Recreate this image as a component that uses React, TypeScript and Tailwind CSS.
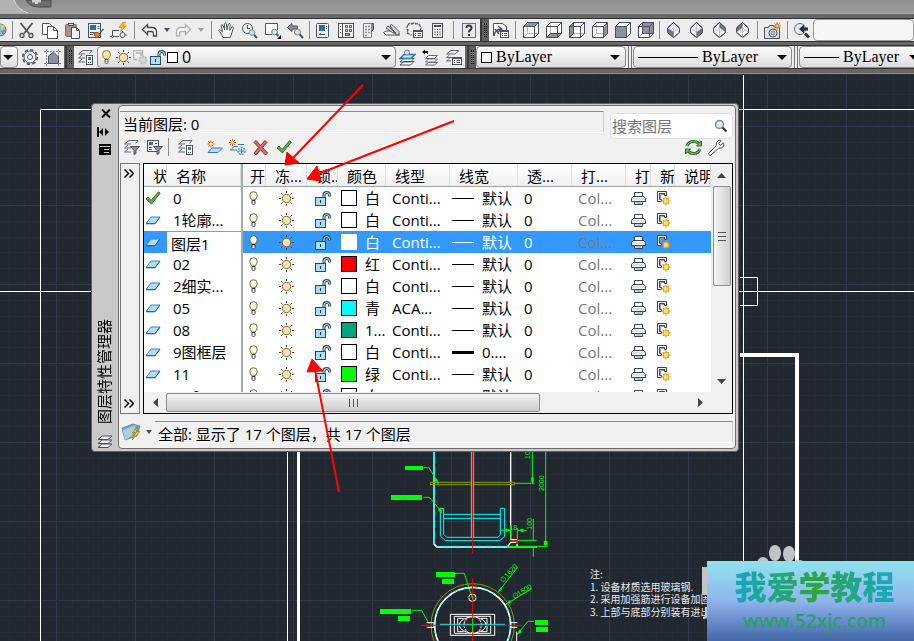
import type { ReactNode } from "react";

const INK = "#4b515d";
const SHADE = "#8b929e";

type SvgProps = { w?: number; h?: number; className?: string; children: ReactNode };

function Svg({ w = 17, h = 17, className = "", children }: SvgProps) {
  return (
    <svg
      width={w}
      height={h}
      viewBox={`0 0 ${w} ${h}`}
      fill="none"
      stroke={INK}
      className={`shrink-0 ${className}`}
      aria-hidden="true"
    >
      {children}
    </svg>
  );
}

/* ---------- toolbar icons ---------- */

const Globe = () => (
  <Svg w={9}>
    <circle cx="0" cy="8" r="6" fill="#7fc4ea" stroke="#3a6ea5" />
    <path d="M0 2 5 4 2 8z" fill="#f5d042" stroke="none" />
    <path d="M1 9 5 8 3 13z" fill="#e0662c" stroke="none" />
  </Svg>
);
const Scissors = () => (
  <Svg>
    <path d="M2.500 1 11 11.500M14.500 1 6 11.500" strokeWidth="1.800" />
    <circle cx="4" cy="13.500" r="2" strokeWidth="1.300" />
    <circle cx="13" cy="13.500" r="2" strokeWidth="1.300" />
  </Svg>
);
const Copy = () => (
  <Svg>
    <path d="M1.500 1.500h7l2 2v9h-9z" fill="#fff" />
    <path d="M6.500 4.500h6l4 4v8h-10z" fill="#fff" />
    <path d="M12.500 4.500v4h4" />
  </Svg>
);
const Paste = () => (
  <Svg>
    <rect x="1.500" y="2.500" width="11" height="12" rx="1" fill="#a2968a" stroke="#7a6f64" />
    <rect x="4.500" y="1.500" width="5" height="2" fill="#ddd" />
    <path d="M7.500 5.500h5l3 3v8h-8z" fill="#f4f6fa" />
    <path d="M12.500 5.500v3h3" />
  </Svg>
);
const MatchProps = () => (
  <Svg>
    <rect x="1.500" y="1.500" width="12" height="14" fill="#f3f4f6" />
    <rect x="3" y="3" width="6" height="5" fill="#2f6fb3" stroke="none" />
    <path d="M10.500 4.500h2M10.500 6.500h2M3 10.500h4M3 12.500h3" />
    <path d="M16.500 7 13 11" stroke="#4a6b8c" strokeWidth="1.500" />
    <path d="M7 10.500q5-.500 7 2l-4 3.500q-3-1.500-3-5.500z" fill="#e08030" stroke="#9c4d12" />
  </Svg>
);
const BlockEdit = () => (
  <Svg>
    <path d="M13 0 9 5.500h3L10.500 9.500l6-5.500h-3.500L16 0z" fill="#ffb52b" stroke="#e07b00" strokeWidth=".6" />
    <path d="M9 8.500H2.500v6H9" />
    <circle cx="12.500" cy="13" r="2.500" fill="#fff" />
    <path d="M0 14.500h5M15 13h2M12.500 9v1.500" />
    <circle cx="2.500" cy="14.500" r="1" fill="#fff" />
  </Svg>
);
const Undo = ({ dim = false }: { dim?: boolean }) => (
  <Svg>
    <path
      d={
        dim
          ? "M15.500 7.500 10.500 2.500v3H6Q1.500 5.500 1.500 10v4h3v-2.500q0-2 2-2h4v3z"
          : "M1.500 7.500 6.500 2.500v3H11q4.500 0 4.500 4.500v4h-3v-2.500q0-2-2-2h-4v3z"
      }
      fill="#fff"
      stroke={dim ? "#a9adb5" : "#3f4653"}
      strokeWidth="1.300"
    />
  </Svg>
);
const SmallCaret = ({ dim = false }: { dim?: boolean }) => (
  <Svg w={6} h={4}>
    <path d="M0 0h6L3 4z" fill={dim ? "#9a9ea8" : "#4a505c"} stroke="none" />
  </Svg>
);
const Pan = () => (
  <Svg>
    <path
      d="M5 15.500 3.500 12 .8 8.300q.6-1.500 2 0L4.700 10 3 3.500q.8-1.700 2 0L6.700 8 6.300 1.800q1-1.800 2 0L9 7.800 10.500 2q1.300-1.300 1.800.3L11.700 8.500 13.800 5q1.500-.8 1.600.8L13.500 12l-1.300 3.500z"
      fill="#fff"
    />
  </Svg>
);
const ZoomRt = () => (
  <Svg>
    <circle cx="6.500" cy="6.500" r="5" fill="#eef1f5" />
    <path d="M6.500 3v3.500H9" />
    <circle cx="11" cy="10.500" r="2.800" fill="#cfe6ee" stroke="#7a8088" />
    <path d="m13 13 3 3" strokeWidth="2" />
  </Svg>
);
const ZoomWindow = () => (
  <Svg>
    <path d="M8 12.500H1.500v-11h12V8" fill="#fff" />
    <circle cx="10.500" cy="10" r="2.800" fill="#cfe6ee" stroke="#7a8088" />
    <path d="m12.500 12 2 2" strokeWidth="2" />
    <path d="M17 13v4h-4z" fill="#111" stroke="none" />
  </Svg>
);
const ZoomPrev = () => (
  <Svg>
    <path d="M.5 5.500 5 1.500v2.500h5.500v3H5v2.500z" fill={SHADE} />
    <circle cx="10.500" cy="10" r="3" fill="#cfe6ee" stroke="#7a8088" />
    <path d="m12.700 12.300 3.300 3.700" strokeWidth="2" />
  </Svg>
);
const PropsPalette = () => (
  <Svg>
    <rect x="2.500" y="1.500" width="12" height="14" rx="1" fill="#f1f3f6" />
    <rect x="5" y="3" width="6" height="6" fill="#2f6fa8" stroke="none" />
    <path d="M12 4.500h1M12 6.500h1M5 12.500h6M5 12.500l2-1.500" />
  </Svg>
);
const DesignCenter = () => (
  <Svg>
    <rect x="1.500" y="1.500" width="15" height="14" fill="#f1f3f6" />
    <path d="M5.500 1.500v14M3 4.500h1M3 7.500h1M3 10.500h1" />
    <path d="M8.500 3.500h2v2h-2zM12.500 3.500h2v2h-2zM8.500 7.500h2v2h-2zM12.500 7.500h2v2h-2z" />
    <rect x="8.500" y="11.500" width="4" height="2" fill="#a3b6c9" />
  </Svg>
);
const ToolPalettes = () => (
  <Svg>
    <path d="M3.500 1.500h8v14h-8z" fill="#eceef1" stroke="#777c86" />
    <path d="M11.500 1.500h2v6l-2 2" fill={SHADE} />
    <path d="M5 4.500h2M8 4.500h2M5 7.500h2M8 7.500h2M5 10.500h2M8 10.500h2M5 13.500h2" strokeWidth="1.500" stroke={SHADE} />
  </Svg>
);
const SheetSet = () => (
  <Svg>
    <path d="m.5 10.500 3-1.500h8l5 4H3z" fill="#fff" />
    <path d="m3 6 2-2 8 7h-3zM7 3.500q1.500-2 3 0l6 6v3l-3 .5z" fill="#d4d7dc" />
    <path d="m5 4 8 7" />
  </Svg>
);
const Markup = () => (
  <Svg>
    <path d="M2 3q2-3 4-1 2-2 4 0 3-1 4 2 2 2 0 4M2 3q-2 3 0 5-2 3 1 4l3 1" strokeDasharray="3 1" strokeWidth="1.300" />
    <rect x="7.500" y="8.500" width="9" height="7" fill="#fff" />
    <path d="M7.500 9.500h9M9 11.500h1M11.500 11.500H15M9 13.500h1M11.500 13.500H15" />
  </Svg>
);
const Calculator = () => (
  <Svg>
    <rect x="3.500" y="1.500" width="10" height="14" fill="#f1f3f6" />
    <path d="M5 4h7" strokeWidth="2" />
    <path d="M5.500 7.500h1M8 7.500h1M10.500 7.500h1M5.500 10h1M8 10h1M10.500 10h1M5.500 12.500h1M8 12.500h1M10.500 12.500h1" strokeWidth="1.300" />
  </Svg>
);
const Help = () => (
  <Svg>
    <rect x="2.500" y="1.500" width="13" height="14" fill="#e7e9ed" stroke="#6a707b" />
    <path d="M6.500 6q0-2.500 2.500-2.500T11.500 6q0 1.300-1.300 2T9 10v.5M9 12v2" strokeWidth="2" stroke="#333844" />
  </Svg>
);
const NamedViews = () => (
  <Svg>
    <path d="M1.500 14V1.500h9l4 3V8" fill="#fff" />
    <path d="M2 14Q3 7 9 7M3 7l4 5M6 4l4 3-4 3" strokeWidth="1.300" />
    <rect x="8.500" y="8.500" width="8" height="7" fill="#fff" />
    <path d="M8.500 9.500h8M10 11.500h1M12 11.500h3M10 13.500h1M12 13.500h3" />
  </Svg>
);

const CUBE_FACES = {
  top: ".500,4.500 4.500,.500 15.500,.500 11.500,4.500",
  bottom: ".500,15.500 4.500,11.500 15.500,11.500 11.500,15.500",
  left: ".500,4.500 4.500,.500 4.500,11.500 .500,15.500",
  right: "11.500,4.500 15.500,.500 15.500,11.500 11.500,15.500",
  front: ".500,4.500 11.500,4.500 11.500,15.500 .500,15.500",
  back: "4.500,.500 15.500,.500 15.500,11.500 4.500,11.500",
};

const Cube = ({ face }: { face: keyof typeof CUBE_FACES }) => (
  <Svg w={16} h={16}>
    <path d="M.5 4.500 4.500.5h11v11l-4 4H.5z" fill="#fff" />
    <path d="M4.500.5v11h11M4.500 11.500l-4 4" stroke={face === "front" ? "none" : "#b4b9c2"} />
    <polygon points={CUBE_FACES[face]} fill={SHADE} />
    <path d="M.5 4.500h11v11M11.500 4.500l4-4" />
    <path d="M.5 4.500 4.500.5h11v11l-4 4H.5z" />
  </Svg>
);

const ISO_FACES = {
  sw: ".500,6 6.500,10 6.500,15.500 .500,10.500",
  se: "12.500,6 6.500,10 6.500,15.500 12.500,10.500",
  ne: "6.500,.500 12.500,6 12.500,10 6.500,5.500",
  nw: "6.500,.500 .500,6 .500,10 6.500,5.500",
};
const IsoCube = ({ face }: { face: keyof typeof ISO_FACES }) => (
  <Svg w={13} h={16}>
    <path d="M6.500.5 12.500 6v4.500l-6 5-6-5V6z" fill="#fff" />
    <path d="M6.500.5v15M.5 6l6 4 6-4M.5 10.500l6-5 6 5" stroke="#b9c3d0" />
    <polygon points={ISO_FACES[face]} fill="#6d7583" stroke="none" />
    <path d="M6.500.5 12.500 6v4.500l-6 5-6-5V6z" />
  </Svg>
);
const Camera = () => (
  <Svg>
    <path d="M.5 5.500h4l1-2h4l1 2h5v11H.5z" fill="#dde0e6" />
    <circle cx="9" cy="11" r="4" fill="#f8f9fb" />
    <circle cx="9" cy="11" r="2" fill="#b8c4cf" stroke="#7a818c" />
    <path d="M13 .5v7M9.500 4h7M10.500 1.500l5 5M15.500 1.500l-5 5" stroke="#e2471c" />
    <circle cx="13" cy="4" r="1.800" fill="#ffd23c" stroke="#f08a1c" />
  </Svg>
);
const BackView = () => (
  <Svg>
    <circle cx="7" cy="7" r="5.500" fill="#e6edf0" stroke="#6b717b" />
    <path d="M6 7 11 2.500v3h4v3h-4v3z" fill="#2c2f35" stroke="none" />
    <path d="m12 11.500 4 4" strokeWidth="3" stroke="#333" />
  </Svg>
);

/* ---------- layer tool icons ---------- */

const Gear = () => (
  <Svg w={18} h={18}>
    <circle cx="9" cy="9" r="7.300" strokeDasharray="3.300 2.430" strokeWidth="1.600" />
    <circle cx="9" cy="9" r="6" fill="#f3f4f6" />
    <circle cx="9" cy="9" r="2.500" fill="#fff" />
  </Svg>
);
const SelectSimilar = () => (
  <Svg>
    <path d="M0 2.500h17M0 14.500h17M2.500 0v17M14.500 0v17" strokeDasharray="2 1" stroke="#7e8591" />
    <path d="M4.500 14.500V7l4-3h2l4 4v6.500z" fill={SHADE} />
  </Svg>
);

/* three stacked sheets */
const Sheets = () => (
  <path d="m1 15.500 4-3.500h10l-4 3.500zM1 11.500 5 8h10l-4 3.500zM1 7.500 5 4h10l-4 3.500z" fill="#f4f4f4" />
);
/* left part of the stack, the rest is hidden by a badge */
const Stack = () => (
  <path
    d="M12.500 4.500 15 1.500H6L1.500 5H8M5 6 1.500 9H8M5 10l-3.500 3H8"
    fill="none"
    stroke="#646a76"
    strokeLinejoin="round"
  />
);

const LayerStates = () => (
  <Svg>
    <Stack />
    <rect x="9.500" y="6.500" width="6" height="9" fill="#fff" />
    <rect x="11" y="8" width="3" height="3" fill="#2f7cc0" stroke="none" />
    <path d="M11 13.500h1M13 13.500h1" />
  </Svg>
);
const MakeCurrent = () => (
  <Svg>
    <path d="m1 16 4-3.500h10L11.500 16zM1 13l4-3.500h10L11.500 13z" fill="#fff" />
    <path d="m1 9.500 4-4h11l-4 4z" fill="#c5e2f7" stroke="#1f73b9" strokeWidth="1.500" />
    <circle cx="8" cy="3.500" r="2.500" fill="#d9dde2" stroke="#7a818c" />
  </Svg>
);
const LayerPrev = () => (
  <Svg>
    <path d="m3.500 9.500 3-3h9l-3 3zM3.500 13l3-3h9l-3 3zM3.500 16l3-2.500h9l-3 2.500z" fill="#fff" stroke="#646a76" />
    <path d="M0 3 3 .5V2h3v3H5V4H3v1.500z" fill="#111" stroke="none" />
  </Svg>
);
const LayerList = () => (
  <Svg>
    <path d="M14 1.500H6L1.500 5H10zM4.500 6l-3 2.500H7M4.500 9.500l-3 2.500H6" stroke="#646a76" />
    <rect x="7.500" y="8.500" width="9" height="7" fill="#fff" />
    <path d="M7.500 9.500h9M9 11.500h1M11.500 11.500H15M9 13.500h1M11.500 13.500H15" />
  </Svg>
);

const Bulb = () => (
  <Svg w={9} h={15}>
    <path d="M3 9Q.5 7 .5 4.500q0-4 4-4t4 4Q8.500 7 6 9z" fill="#ffe79a" stroke="#8b7a45" />
    <path d="M3 9.500h3v3L4.500 14 3 12.500z" fill="#ddd" stroke="#555" />
  </Svg>
);
const RowBulb = () => (
  <Svg w={9} h={15}>
    <path d="M3 9Q.8 7 .8 4.300q0-3.600 3.700-3.600t3.700 3.600Q8.200 7 6 9z" fill="#fffad6" stroke="#6f6648" />
    <path d="M3 9.500h3v3L4.500 14 3 12.500z" fill="#fff" stroke="#333" />
  </Svg>
);
const Sun = () => (
  <Svg w={15} h={15}>
    <path
      d="M7.500 0v2M7.500 13v2M0 7.500h2M13 7.500h2M2 2l1.500 1.500M11.500 11.500 13 13M13 2l-1.500 1.500M3.500 11.500 2 13"
      stroke="#3f3d3a"
    />
    <circle cx="7.500" cy="7.500" r="4.200" fill="#fbe3a8" stroke="#7a6a4a" />
  </Svg>
);
const Padlock = () => (
  <Svg w={17} h={15}>
    <path d="M9 7V4q0-2.500 2.700-2.500T14.500 4v1.500" stroke="#2a4a5f" strokeWidth="3" />
    <path d="M9 7V4q0-2.500 2.700-2.500T14.500 4v1" stroke="#c9ebf5" />
    <rect x=".5" y="6.500" width="10" height="8" fill="#a8def0" stroke="#2a4a5f" />
    <path d="M5.500 9v3" stroke="#22384a" />
  </Svg>
);
const VpFreeze = () => (
  <Svg w={15} h={15}>
    <path d="M.5 9.500v-9h9v5M3 3h5v3M.5 9.500h4" stroke="#b5b5b5" strokeWidth="1.500" />
    <circle cx="10" cy="10" r="3.500" fill="#d5d5d5" stroke="#bbb" strokeWidth="2" strokeDasharray="2 1" />
  </Svg>
);
const Sheet = () => (
  <Svg w={16} h={9}>
    <path d="M1 7.500 6 1h9l-5 6.500z" fill="#b5dbf2" stroke="#3c87c0" />
    <path d="M1 7.800h9L15 1" stroke="#1b5f9e" />
  </Svg>
);
const Check = () => (
  <Svg w={16} h={14}>
    <path d="m1 8 2-2 3 3.500L13.500.8l1.700 1.400L6.500 13z" fill="#67ad55" stroke="#2d6e24" />
  </Svg>
);
const Printer = () => (
  <Svg w={15} h={15}>
    <path d="M3.500 5.500v-4h8v4" fill="#fff" stroke="#3d4350" />
    <path d="M2 5.500h11l1.500 2v3h-14v-3z" fill="#fff" stroke="#3d4350" />
    <path d="M1 8h13" stroke="#d5d8dd" strokeWidth="1.500" />
    <path d="M.5 10.500h14" stroke="#3d4350" />
    <path d="M3.500 10.500h8v3h-8z" fill="#e6edf4" stroke="#3d4350" />
    <path d="M5 12h5" stroke="#7f9cb8" />
  </Svg>
);
const NewVp = () => (
  <Svg w={16} h={15}>
    <path d="M1.500 10.500v-10h9v4h-2v-2h-5v6h2v2z" fill="#fff" stroke="#3d4350" />
    <path d="M4.500 8V3.500H8" stroke="#9aa2af" />
    <path d="M10 5.500v9M5.500 10h9M7 7l6 6M13 7l-6 6" stroke="#ee7d17" />
    <circle cx="10" cy="10" r="2.800" fill="#ffe65a" stroke="#f5a11f" />
  </Svg>
);

/* ---------- dialog icons ---------- */

const LayerFilter = () => (
  <Svg>
    <Stack />
    <path d="M7.500 7.500h9l-3.500 4v3l-2 1v-4z" fill={SHADE} />
  </Svg>
);
const GroupFilter = () => (
  <Svg>
    <rect x="1.500" y="1.500" width="11" height="11" fill="#f1f3f6" />
    <rect x="3" y="3" width="4" height="3" fill="#2f6fa8" stroke="none" />
    <path d="M9 4.500h2M3 8.500h3M3 10.500h3" />
    <path d="M7.500 7.500h9l-3.500 4v3l-2 1v-4z" fill={SHADE} />
  </Svg>
);
const Spark = ({ x, y }: { x: number; y: number }) => (
  <g transform={`translate(${x} ${y})`}>
    <path d="M0-3.500v7M-3.500 0h7M-2.500-2.500l5 5M2.500-2.500l-5 5" stroke="#d8592a" />
    <circle r="1.700" fill="#ffd94a" stroke="none" />
  </g>
);
const NewLayer = () => (
  <Svg>
    <path d="m2 13.500 4-4.500h10.500L12 13.500z" fill="#b9dcf3" stroke="#2e78b5" />
    <Spark x={5} y={5} />
  </Svg>
);
const NewFrozenLayer = () => (
  <Svg>
    <path d="m1.500 11 3.500-3.500h4M1.500 11H8M9 5.500h6" stroke="#2e78b5" />
    <Spark x={3.500} y={3.500} />
    <circle cx="12.500" cy="12" r="3.500" fill="#dcebf7" stroke="#5a8fc0" strokeDasharray="2 1" strokeWidth="1.500" />
    <path d="M12.500 9.500v5M10 12h5" stroke="#3b7cb6" />
  </Svg>
);
const DeleteLayer = () => (
  <Svg>
    <path d="M2 3.500 4 1.500l4.500 5 4.500-5 2 2-4.700 5L15.500 14l-2 2-5-5.300L4 16l-2-2 4.700-5.500z" fill="#d9686a" stroke="#97272b" />
  </Svg>
);
const Refresh = () => (
  <Svg>
    <path d="M2 7Q3.500 2.500 8.500 2.500q3.500 0 5 2" stroke="#236a26" strokeWidth="3" />
    <path d="M2 7Q3.500 2.500 8.500 2.500q3.500 0 5 2" stroke="#9bcf86" />
    <path d="M15 10Q13.500 14.500 8.500 14.500q-3.500 0-5-2" stroke="#236a26" strokeWidth="3" />
    <path d="M15 10Q13.500 14.500 8.500 14.500q-3.500 0-5-2" stroke="#9bcf86" />
    <path d="M16.500 2v5h-5zM.5 15v-5h5z" fill="#7dba68" stroke="#236a26" />
  </Svg>
);
const Wrench = () => (
  <Svg>
    <path
      d="m.8 14 7.400-7.200Q7.500 3 10.500 1.500q1.500-.7 2.500 0L10.700 4.500l1.500 1.800L15.500 4q1.300 2-.5 4-1.500 1.500-4.200 1L3 16q-1.300.7-2-.3-.7-1-.2-1.700z"
      fill="#f2f3f5"
    />
  </Svg>
);
const Magnifier = () => (
  <Svg w={14} h={14}>
    <circle cx="5.500" cy="5.500" r="4" fill="#d9eef2" stroke="#7c868c" strokeWidth="1.500" />
    <path d="m8.500 8.500 4 4" stroke="#2f2f2f" strokeWidth="2" />
  </Svg>
);
const Chevrons = () => (
  <Svg w={10} h={9}>
    <path d="m.5.5 4 4-4 4M5.500.5l4 4-4 4" stroke="#000" strokeWidth="1.500" />
  </Svg>
);
const FolderFlash = () => (
  <Svg w={21} h={18}>
    <path d="m1 5 11-4 7 2-3 10-12 4z" fill="#6fa3b8" stroke="#5b8394" strokeWidth=".7" />
    <path d="m2 7 13-5-4 11-7 4z" fill="#a9d0df" stroke="none" />
    <path d="m17 4-6 6 4-.5L11 17l8-8.500-4 .5z" fill="#ffcf2e" stroke="#a97c14" strokeWidth=".7" />
  </Svg>
);

const Caret = () => (
  <Svg w={10} h={5} className="pointer-events-none">
    <path d="M0 0h10L5 5z" fill="#000" stroke="none" />
  </Svg>
);

/* ---------- toolbar pieces ---------- */

function Tool({ label, children }: { label: string; children: ReactNode }) {
  return (
    <button aria-label={label} title={label} className="flex w-[23px] shrink-0 items-center justify-center">
      {children}
    </button>
  );
}

function Sep({ className = "w-2" }: { className?: string }) {
  return (
    <div className={`flex shrink-0 items-center justify-center ${className}`}>
      <div className="h-[18px] w-px bg-[#8e8e8e]" />
    </div>
  );
}

function Grip() {
  return (
    <div className="flex w-[9px] shrink-0 justify-center gap-px border-l-2 border-[#3a3a3a] bg-[#5e5e5e] py-1">
      <div className="border-l border-dotted border-black" />
      <div className="border-l border-dotted border-black" />
    </div>
  );
}

function ComboSep() {
  return (
    <div className="flex w-[7px] shrink-0 justify-center gap-[2px]">
      <div className="w-px bg-[#777]" />
      <div className="w-px bg-[#777]" />
    </div>
  );
}

type ComboProps = { label: string; value: string; className: string; selectClass: string; children?: ReactNode };

function Combo({ label, value, className, selectClass, children }: ComboProps) {
  return (
    <div
      className={`flex items-center rounded-sm border border-[#8b8b8b] bg-linear-to-b from-[#fdfdfd] to-[#dcdcdc] ${className}`}
    >
      {children}
      <select
        aria-label={label}
        className={`-mr-[10px] h-full min-w-0 flex-1 appearance-none bg-transparent pl-1 text-base leading-5 text-black ${selectClass}`}
      >
        <option>{value}</option>
      </select>
      <Caret />
    </div>
  );
}

function TopToolbar() {
  return (
    <div className="flex h-6 overflow-hidden border-y border-[#333] bg-[#ededed]">
      <button aria-label="Web" className="flex w-[9px] shrink-0 items-center"><Globe /></button>
      <Sep className="w-[6px]" />
      <Tool label="Cut"><Scissors /></Tool>
      <Tool label="Copy"><Copy /></Tool>
      <Tool label="Paste"><Paste /></Tool>
      <Tool label="Match Properties"><MatchProps /></Tool>
      <Tool label="Block Editor"><BlockEdit /></Tool>
      <Sep />
      <Tool label="Undo"><Undo /></Tool>
      <button aria-label="Undo list" className="flex w-[11px] shrink-0 items-center justify-center"><SmallCaret /></button>
      <Tool label="Redo"><Undo dim /></Tool>
      <button aria-label="Redo list" className="flex w-3 shrink-0 items-center justify-center"><SmallCaret dim /></button>
      <Sep />
      <Tool label="Pan"><Pan /></Tool>
      <Tool label="Zoom Realtime"><ZoomRt /></Tool>
      <Tool label="Zoom Window"><ZoomWindow /></Tool>
      <Tool label="Zoom Previous"><ZoomPrev /></Tool>
      <Sep className="w-1" />
      <Tool label="Properties"><PropsPalette /></Tool>
      <Tool label="DesignCenter"><DesignCenter /></Tool>
      <Tool label="Tool Palettes"><ToolPalettes /></Tool>
      <Tool label="Sheet Set Manager"><SheetSet /></Tool>
      <Tool label="Markup Set Manager"><Markup /></Tool>
      <Tool label="QuickCalc"><Calculator /></Tool>
      <Sep />
      <Tool label="Help"><Help /></Tool>
      <Grip />
      <Tool label="Named Views"><NamedViews /></Tool>
      <Sep className="w-[7px]" />
      <Tool label="Top"><Cube face="top" /></Tool>
      <Tool label="Bottom"><Cube face="bottom" /></Tool>
      <Tool label="Left"><Cube face="left" /></Tool>
      <Tool label="Right"><Cube face="right" /></Tool>
      <Tool label="Front"><Cube face="front" /></Tool>
      <Tool label="Back"><Cube face="back" /></Tool>
      <Sep className="w-[5px]" />
      <Tool label="SW Isometric"><IsoCube face="sw" /></Tool>
      <Tool label="SE Isometric"><IsoCube face="se" /></Tool>
      <Tool label="NE Isometric"><IsoCube face="ne" /></Tool>
      <Tool label="NW Isometric"><IsoCube face="nw" /></Tool>
      <Sep className="w-[7px]" />
      <Tool label="Create Camera"><Camera /></Tool>
      <Sep className="w-[6px]" />
      <Tool label="Previous View"><BackView /></Tool>
      <input aria-label="View name" className="min-w-0 flex-1 rounded-sm border border-[#999] bg-[#f6f6f6]" />
    </div>
  );
}

function LayerToolbar() {
  return (
    <div className="flex h-6 overflow-hidden border-y border-[#333] bg-[#ededed]">
      <Combo label="Workspace" value="" className="w-[18px] shrink-0 pr-1" selectClass="" />
      <Tool label="Workspace Settings"><Gear /></Tool>
      <Tool label="My Workspace"><SelectSimilar /></Tool>
      <div className="w-px shrink-0 bg-[#666]" />
      <Grip />
      <Tool label="Layer Properties"><LayerStates /></Tool>
      <Combo label="Layer" value="0" className="w-[299px] shrink-0 pr-1 pl-1" selectClass="font-['Open_Sans',sans-serif]">
        <div className="flex items-center">
          <Bulb />
          <div className="ml-[5px] flex items-center gap-[2px]">
            <Sun />
            <VpFreeze />
            <Padlock />
          </div>
          <div className="size-[11px] border border-black bg-white" />
        </div>
      </Combo>
      <Tool label="Make Current"><MakeCurrent /></Tool>
      <Tool label="Layer Previous"><LayerPrev /></Tool>
      <Tool label="Layer States Manager"><LayerList /></Tool>
      <div className="w-[2px] shrink-0 bg-[#666]" />
      <Grip />
      <Combo label="Color" value="ByLayer" className="w-[150px] shrink-0 pr-[5px] pl-1" selectClass="font-['Liberation_Serif',serif]">
        <div className="size-[11px] shrink-0 border border-black bg-white" />
      </Combo>
      <ComboSep />
      <Combo label="Linetype" value="ByLayer" className="w-[159px] shrink-0 pr-1 pl-1" selectClass="font-['Liberation_Serif',serif]">
        <div className="h-px w-[60px] shrink-0 bg-black" />
      </Combo>
      <ComboSep />
      <Combo label="Lineweight" value="ByLayer" className="min-w-[125px] flex-1 pr-1 pl-1" selectClass="font-['Liberation_Serif',serif]">
        <div className="h-px w-[35px] shrink-0 bg-black" />
      </Combo>
    </div>
  );
}

/* ---------- drawing area ---------- */

function Drawing() {
  return (
    <svg className="absolute inset-0 h-full w-full" aria-label="Drawing">
      <defs>
        <pattern id="grid" x="56" y="51" width="79" height="79" patternUnits="userSpaceOnUse">
          <path
            d="M16.500 0v79M32.500 0v79M47.500 0v79M63.500 0v79M0 16.500h79M0 32.500h79M0 47.500h79M0 63.500h79"
            stroke="#262d38"
          />
          <path d="M.5 0v79M0 .5h79" stroke="#313849" />
        </pattern>
      </defs>
      <rect width="100%" height="100%" fill="url(#grid)" />
      <g transform="translate(0 -75)" fill="none" stroke="#fff">
        <path d="M40.500 700V109.500H2000M0 291.500h2000M743.500 75V700M740 277.500h17.500v28H740" />
        <path d="M287.500 440V700" />
        <path d="M298.500 440V700" strokeWidth="3" />
        <path d="M740 355h57V700" strokeWidth="4" />
        {/* note block */}
        <g fill="#e8e8e8" stroke="none" fontSize="10" fontFamily="'Noto Sans CJK SC', sans-serif">
          <text x="590" y="578">注:</text>
          <text x="590" y="591">1. 设备材质选用玻璃钢.</text>
          <text x="590" y="603">2. 采用加强筋进行设备加固</text>
          <text x="590" y="616">3. 上部与底部分别装有进出</text>
        </g>
        <g transform="translate(370 445) scale(.33333)" strokeWidth="3">
          {/* tank section */}
          <path d="M192 0v298l8 8h213M422 0v285" strokeWidth="4" />
          <path d="M194 0v296l8 8h210l8-10" stroke="#0ff" strokeDasharray="24 8" />
          <path d="M181 112h253v7H181z" stroke="#8a9a00" />
          <path d="M211 190h10v78l9 9h154l7-7v-80h13v84l-15 13H226l-15-14zM221 208h170M221 220h170" stroke="#0ff" />
          <path d="M304 0v278M311 0v278" stroke="#0ff" />
          <path d="M308 0v326" stroke="#f00" />
          <g stroke="#0f0">
            <path d="M487 0v114M434 115h60M527 0v304M411 304h123M442 286h58M490 222v64M490 307v28M391 256h25M442 256h28M422 240v45M442 248v34" />
            <path d="M411 306h90" strokeWidth="6" />
            <path d="M160 68h17l28 47M160 157h18l36 42M255 385h28l22 70M125 496h30l22 40M492 529h-18l-31 38M443 367l-60 76M485 431l-82 50" />
            <path d="m205 117-12-12 8-4zM216 206l-12-12 8-6zM522 288h10v12h-10zM408 251l14 5-14 5zM452 252h8v8h-8zM404 480l16-14 4 6zM384 442l8-14 5 5zM441 568l14-6-6-8zM484 98h7v12h-7z" fill="#0f0" strokeWidth="1" />
          </g>
          <path d="M422 284h18v8h-18l-8 12M441 296v8" strokeWidth="4" />
          <path d="M418 286h26M440 272v28" stroke="#f00" strokeDasharray="10 4" />
          <g fill="#0f0" stroke="none">
            <path d="M105 63h54v12h-54zM63 150h93v15H63zM198 381h57v15h-57zM216 402h36v15h-36zM30 492h93v15H30zM84 513h36v15H84zM495 525h39v15h-39zM498 546h36v15h-36z" />
          </g>
          <g fill="#0f0" stroke="none" fontSize="21" fontFamily="'Liberation Sans', sans-serif">
            <text transform="translate(479 42) rotate(-90)">10</text>
            <text transform="translate(521 138) rotate(-90)">2000</text>
            <text transform="translate(485 254) rotate(-90)">100</text>
            <text x="418" y="255">18</text>
            <text transform="translate(400 413) rotate(-48)">∅1620</text>
            <text transform="translate(432 463) rotate(-32)">∅1500</text>
          </g>
          {/* plan view */}
          <circle cx="308" cy="541" r="125" stroke="#8a9a00" />
          <circle cx="308" cy="541" r="114" strokeWidth="5" />
          <circle cx="308" cy="541" r="114" stroke="#0ff" strokeDasharray="12 18" />
          <path d="M170 533h22v14h-22M442 533h-20v14h20M440 560v40" />
          <path d="M241 508h133v63H241zM253 514h109v51H253zM281 520h-18v40h18M333 520h18v40h-18" />
          <circle cx="308" cy="540" r="26" strokeDasharray="9 3" />
          <ellipse cx="308" cy="540" rx="40" ry="24" />
          <ellipse cx="308" cy="540" rx="22" ry="24" stroke="#f00" strokeDasharray="5 9" />
          <circle cx="307" cy="458" r="11" />
          <path d="M292 458h30" stroke="#f00" />
          <path d="M210 538h195" stroke="#0ff" />
          <path d="M153 541h303M308 400v200M170 538v12" stroke="#f00" />
          <path d="M308 452v12M308 520v45" stroke="#0f0" />
        </g>
      </g>
    </svg>
  );
}

/* ---------- layer properties manager ---------- */

type Layer = {
  name: string;
  current?: boolean;
  editing?: boolean;
  swatch: string;
  color: string;
  linetype?: string;
  thick?: boolean;
  weight?: string;
};

const layers: Layer[] = [
  { name: "0", current: true, swatch: "bg-white", color: "白" },
  { name: "1轮廓...", swatch: "bg-white", color: "白" },
  { name: "图层1", editing: true, swatch: "bg-white", color: "白" },
  { name: "02", swatch: "bg-[#ff0000]", color: "红" },
  { name: "2细实...", swatch: "bg-white", color: "白" },
  { name: "05", swatch: "bg-[#00ffff]", color: "青", linetype: "ACA..." },
  { name: "08", swatch: "bg-[#00a57c]", color: "1..." },
  { name: "9图框层", swatch: "bg-white", color: "白", thick: true, weight: "0...." },
  { name: "11", swatch: "bg-[#00ff00]", color: "绿" },
  { name: "Defpoi...", swatch: "bg-white", color: "白" },
];

const columns = [
  { title: "状", width: "w-[23px]" },
  { title: "名称", width: "w-[74px]" },
  { title: "开", width: "w-[25px]" },
  { title: "冻...", width: "w-[41px]" },
  { title: "锁..", width: "w-[31px]" },
  { title: "颜色", width: "w-[48px]" },
  { title: "线型", width: "w-[64px]" },
  { title: "线宽", width: "w-[68px]" },
  { title: "透...", width: "w-[54px]" },
  { title: "打...", width: "w-[54px]" },
  { title: "打", width: "w-[25px]" },
  { title: "新", width: "w-[24px]" },
  { title: "说明", width: "w-auto" },
];

function LayerRow({ layer }: { layer: Layer }) {
  const { editing } = layer;
  return (
    <tr className={`h-[22px] ${editing ? "bg-[#3399ff] text-white" : "bg-white text-black"}`}>
      <td className="pl-px">{layer.current ? <Check /> : <Sheet />}</td>
      <td className={editing ? "" : "pl-[6px]"}>
        {editing ? (
          <input
            aria-label="图层名称"
            defaultValue={layer.name}
            className="block h-[22px] w-full border-t border-[#999] bg-white pt-[3px] pl-1 text-black outline-none"
          />
        ) : (
          layer.name
        )}
      </td>
      <td className="border-l-2 border-[#a8a8a8] pl-[6px]"><RowBulb /></td>
      <td className="pl-[13px]"><Sun /></td>
      <td className="pl-2"><Padlock /></td>
      <td className="pl-[3px]">
        <div className="flex items-center gap-2">
          <div className={`size-4 shrink-0 border ${editing ? "border-white" : "border-black"} ${layer.swatch}`} />
          {layer.color}
        </div>
      </td>
      <td className="pl-[6px]">{layer.linetype ?? "Conti..."}</td>
      <td className="pl-[2px]">
        <div className="flex items-center gap-2">
          <div className={`w-[22px] shrink-0 bg-current ${layer.thick ? "h-[3px]" : "h-px"}`} />
          {layer.weight ?? "默认"}
        </div>
      </td>
      <td className="pl-[6px]">0</td>
      <td className="pl-[6px] text-[#777]">Col...</td>
      <td className="pl-[5px]"><Printer /></td>
      <td className="pl-[5px]"><NewVp /></td>
      <td />
    </tr>
  );
}

function LayerTable() {
  return (
    <div className="h-[228px] min-w-0 flex-1 overflow-hidden bg-white">
      <table className="w-full table-fixed border-separate border-spacing-0 whitespace-nowrap [&_td]:overflow-hidden [&_td]:py-0 [&_td]:pr-0">
        <thead>
          <tr className="h-[23px]">
            {columns.map((col, i) => (
              <th
                key={i}
                className={`${col.width} overflow-hidden border-b border-b-[#a0a0a0] bg-linear-to-b from-white to-[#eff0f3] p-0 text-left font-normal ${
                  i === 2 ? "border-l-2 border-l-[#a8a8a8]" : ""
                }`}
              >
                <div
                  className={`h-[22px] overflow-hidden border-r border-[#dcdfe4] leading-6 ${
                    i === 2 ? "ml-[7px]" : "ml-2 pl-px"
                  }`}
                >
                  {col.title}
                </div>
              </th>
            ))}
          </tr>
        </thead>
        <tbody>
          {layers.map((layer) => (
            <LayerRow key={layer.name} layer={layer} />
          ))}
        </tbody>
      </table>
    </div>
  );
}

function VerticalScroll() {
  return (
    <div className="flex w-[21px] flex-col items-center bg-[#f0f0f0]">
      <button aria-label="Scroll up" className="flex h-[22px] w-full items-center justify-center">
        <Svg w={9} h={5}><path d="M0 5h9L4.500 0z" fill="#444" stroke="none" /></Svg>
      </button>
      <div className="flex h-[100px] w-[18px] flex-col items-center justify-center gap-[3px] rounded-xs border border-[#8f8f8f] bg-linear-to-r from-[#f6f6f6] to-[#cfcfd1]">
        <div className="h-px w-2 bg-[#555]" />
        <div className="h-px w-2 bg-[#555]" />
        <div className="h-px w-2 bg-[#555]" />
      </div>
      <button aria-label="Scroll down" className="mt-auto flex h-[22px] w-full items-center justify-center">
        <Svg w={9} h={5}><path d="M0 0h9L4.500 5z" fill="#444" stroke="none" /></Svg>
      </button>
    </div>
  );
}

function HorizontalScroll() {
  return (
    <div className="flex h-[21px] items-center bg-[#f0f0f0] pr-[21px]">
      <button aria-label="Scroll left" className="flex h-full w-[22px] items-center justify-center">
        <Svg w={5} h={9}><path d="M5 0v9L0 4.500z" fill="#444" stroke="none" /></Svg>
      </button>
      <div className="flex h-[19px] w-[374px] items-center justify-center gap-[3px] rounded-xs border border-[#8f8f8f] bg-linear-to-b from-[#f4f4f4] to-[#cdcdd0]">
        <div className="h-2 w-px bg-[#555]" />
        <div className="h-2 w-px bg-[#555]" />
        <div className="h-2 w-px bg-[#555]" />
      </div>
      <button aria-label="Scroll right" className="ml-auto flex h-full w-[22px] items-center justify-center">
        <Svg w={5} h={9}><path d="M0 0v9l5-4.500z" fill="#444" stroke="none" /></Svg>
      </button>
    </div>
  );
}

function LayerManager() {
  return (
    <section
      aria-label="图层特性管理器"
      className="absolute top-7 left-[91px] flex w-[648px] rounded-sm border border-[#5f5f5f] bg-[#c9c9c9] font-['Open_Sans','Noto_Sans_CJK_SC',sans-serif] text-[15px] leading-[22px] text-black"
    >
      {/* title strip */}
      <div className="flex w-[26px] shrink-0 flex-col items-center pt-[2px] pb-[2px]">
        <button aria-label="Close" className="ml-[2px] flex h-[14px] items-center">
          <Svg w={10} h={9}><path d="m1 .5 8 8M9 .5l-8 8" stroke="#000" strokeWidth="2" /></Svg>
        </button>
        <button aria-label="Auto-hide" className="mt-1 flex h-[15px] items-center">
          <Svg w={12} h={10} className="mr-1">
            <path d="M1 0v10" stroke="#000" strokeWidth="2" />
            <path d="M2 5 6 1v8zM12 5 8 1v8z" fill="#000" stroke="none" />
          </Svg>
        </button>
        <button aria-label="Properties" className="mt-[3px] flex h-[15px] items-center">
          <Svg w={12} h={11}>
            <path d="M0 0h12v11H0z" fill="#000" stroke="none" />
            <path d="M1 2.500h10M5 5.500h5M5 8.500h5" stroke="#c9c9c9" />
          </Svg>
        </button>
        <h2 className="mt-auto mr-[3px] rotate-180 whitespace-nowrap [text-orientation:sideways] [writing-mode:vertical-rl]">
          图层特性管理器
        </h2>
        <Svg w={16} h={17} className="mt-2"><Sheets /></Svg>
      </div>

      <div className="mt-px mr-[2px] mb-[2px] flex min-w-0 flex-1 flex-col rounded-sm border border-[#6f6f6f] bg-[#f0f0f0] pt-[5px] pr-[2px] pb-[5px] pl-px">
        <div className="flex gap-[6px]">
          <p className="h-[22px] flex-1 border-t border-r border-b border-t-[#8a8a8a] border-r-[#ccc] border-b-white pl-[3px] leading-6">
            当前图层: 0
          </p>
          <div className="mt-[2px] flex h-[26px] w-[123px] items-center rounded-sm border border-[#e0e0e0] bg-white pr-1">
            <input
              type="search"
              aria-label="搜索图层"
              placeholder="搜索图层"
              className="min-w-0 flex-1 pl-px outline-none placeholder:text-[#757575]"
            />
            <Magnifier />
          </div>
        </div>

        <div className="flex h-4 items-center">
          <Tool label="New Property Filter"><LayerFilter /></Tool>
          <Tool label="New Group Filter"><GroupFilter /></Tool>
          <Sep className="w-1" />
          <div className="ml-1 flex"><Tool label="Layer States Manager"><LayerStates /></Tool></div>
          <div className="ml-[6px] flex">
            <Tool label="New Layer"><NewLayer /></Tool>
            <Tool label="New Layer VP Frozen"><NewFrozenLayer /></Tool>
            <Tool label="Delete Layer"><DeleteLayer /></Tool>
            <Tool label="Set Current"><Check /></Tool>
          </div>
          <div className="mr-[5px] ml-auto flex">
            <Tool label="Refresh"><Refresh /></Tool>
            <Tool label="Settings"><Wrench /></Tool>
          </div>
        </div>

        <div className="mt-2 flex gap-[3px]">
          <div className="flex w-5 shrink-0 flex-col items-center justify-between border border-[#777] py-[5px]">
            <button aria-label="Expand filters" className="mr-[2px]"><Chevrons /></button>
            <button aria-label="Expand filter tree" className="mr-[2px]"><Chevrons /></button>
          </div>
          <div className="min-w-0 flex-1 border border-black">
            <div className="flex">
              <LayerTable />
              <VerticalScroll />
            </div>
            <HorizontalScroll />
          </div>
        </div>

        <div className="mt-[7px] flex">
          <button aria-label="Filter options" className="flex w-[35px] items-center gap-1 pl-px">
            <FolderFlash />
            <SmallCaret />
          </button>
          <p className="h-[22px] flex-1 border-t border-r border-b border-t-[#8a8a8a] border-r-[#ccc] border-b-white pl-[3px] leading-6">
            全部: 显示了 17 个图层，共 17 个图层
          </p>
        </div>
      </div>
    </section>
  );
}

function Watermark() {
  return (
    <div className="absolute right-0 bottom-0">
      <svg width="212" height="100" className="absolute right-0 bottom-0" aria-hidden="true">
        <g fill="#c3c4c8">
          <ellipse cx="73" cy="12" rx="6" ry="8" />
          <ellipse cx="87" cy="13" rx="6" ry="8" />
          <ellipse cx="61" cy="23" rx="6" ry="7" />
          <ellipse cx="97" cy="24" rx="6" ry="5" />
          <path d="M0 26h5v27H0zM3 66h3v9q0 3-5 3v-2q2 0 2-2z" />
        </g>
      </svg>
      <div className="relative flex h-20 w-[207px] flex-col items-center bg-linear-to-b from-[#8fe3ec] via-[#90b4ec] to-[#4468a8] pt-1 pl-2">
        <p className="bg-linear-to-r from-[#18a8c4] via-[#2fa33c] to-[#1aa9c6] bg-clip-text font-['Noto_Sans_CJK_SC',sans-serif] text-[32px] leading-10 font-black text-transparent">
          我爱学教程
        </p>
        <a href="#" className="font-['Open_Sans',sans-serif] text-[19px] leading-8 font-semibold text-[#28a06c]">
          www.52xjc.com
        </a>
      </div>
    </div>
  );
}

function Arrows() {
  return (
    <svg className="pointer-events-none absolute inset-0 h-full w-full" aria-hidden="true">
      <g transform="translate(0 -75)" stroke="#f00" strokeWidth="2" fill="#f00">
        <path d="M363 85 293 158M454 121 318 174M339 492 315 370" />
        <path d="m285 165 2-13 12 11zM307 179l10-13 4 15zM312 359l-5 13 16-1z" strokeWidth="1" />
      </g>
    </svg>
  );
}

export default function App() {
  return (
    <div className="flex min-h-screen flex-col overflow-hidden bg-[#666]">
      <header className="h-[14px] border-b border-[#adadad] bg-linear-to-b from-[#8e8e8e] to-[#9c9c9c]">
        <svg width="60" height="13" className="block" aria-hidden="true">
          <path d="M0 0h14q4 10 14 13H0z" fill="#b2b2b2" />
          <path d="M14 0q4 10 14 13" stroke="#d9d9d9" fill="none" />
          <path d="M26 0q4 7 12 7h13V0z" fill="#6e6e6e" stroke="#4a4a4a" />
          <path d="M36.500 0v4M32 1h9" stroke="#cfcfcf" strokeWidth="3" />
        </svg>
      </header>
      <div className="mt-1 flex flex-col gap-[3px]">
        <TopToolbar />
        <LayerToolbar />
      </div>
      <main className="relative mt-1 flex-1 overflow-hidden border-t border-[#8c8c8c] bg-[#212830]">
        <div className="relative h-full min-h-[567px] border-t border-[#333]">
          <Drawing />
          <Watermark />
          <LayerManager />
          <Arrows />
        </div>
      </main>
    </div>
  );
}
